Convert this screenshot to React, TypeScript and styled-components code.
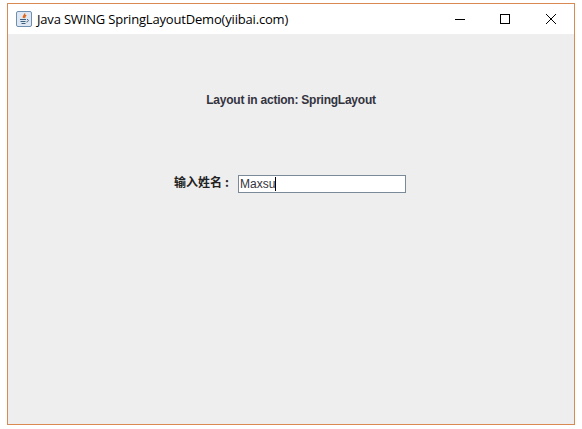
import React from "react";
import styled, { createGlobalStyle } from "styled-components";

const GlobalStyle = createGlobalStyle`
    html, body {
        margin: 0;
        background: #ffffff;
    }
`;

const Page = styled.div`
    width: 582px;
    height: 429px;
    padding: 3px 0 0 7px;
    box-sizing: border-box;
    overflow: hidden;
`;

const Frame = styled.div`
    width: 568px;
    height: 422px;
    box-sizing: border-box;
    border: 1px solid #d98a52;
    display: flex;
    flex-direction: column;
`;

const TitleBar = styled.div`
    height: 30px;
    flex: none;
    background: #ffffff;
    display: flex;
    align-items: center;
    padding-left: 8px;
`;

const TitleText = styled.span`
    margin-left: 5px;
    font: 13px/16px "Open Sans", "Noto Sans", sans-serif;
    color: #000000;
    white-space: nowrap;
    letter-spacing: -0.18px;
`;

const WindowButtons = styled.div`
    margin-left: auto;
    display: flex;
`;

const WindowButton = styled.div<{ $width: number }>`
    width: ${({ $width }) => $width}px;
    height: 30px;
    display: flex;
    align-items: center;
    justify-content: center;
`;

const Content = styled.div`
    flex: 1;
    background: #eeeeee;
    display: flex;
    flex-direction: column;
    padding-top: 59px;
`;

const Heading = styled.div`
    text-align: center;
    font: bold 12px/14px "Liberation Sans", Arial, sans-serif;
    letter-spacing: -0.24px;
    color: #333340;
`;

const FormRow = styled.div`
    margin-top: 68px;
    padding-left: 166px;
    display: flex;
    align-items: flex-start;
    gap: 6px;
`;

const FieldLabel = styled.label`
    width: 58px;
    white-space: nowrap;
    font: bold 12px/14px "Noto Sans CJK SC", sans-serif;
    color: #222222;
`;

const LabelColon = styled.span`
    margin-left: 3px;
`;

const TextBox = styled.div`
    width: 168px;
    height: 18px;
    box-sizing: border-box;
    background: #ffffff;
    border: 1px solid #7a8a99;
    display: flex;
    align-items: center;
    padding-left: 1px;
    font: 12px/14px "Liberation Sans", Arial, sans-serif;
    color: #333340;
`;

const Caret = styled.span`
    width: 1px;
    height: 14px;
    background: #000000;
`;

const JavaIcon = () => (
    <svg width="16" height="16" viewBox="0 0 16 16">
        <rect x="0.5" y="0.5" width="15" height="15" rx="1.5" fill="#dfe8f2" stroke="#6f8fb0" />
        <path d="M8.5 2.5c1 1.5-2 2.5-1 4.5M10 4c-.5 1-2 1.5-1 3" fill="none" stroke="#e2661b" strokeWidth="1.4" />
        <path d="M4 8.5h6M4.5 10.5h5M5.5 12.5h4" fill="none" stroke="#3f5f80" strokeWidth="1" />
        <path d="M11 8.5c2 0 2 2-.5 2.5" fill="none" stroke="#3f5f80" strokeWidth="1" />
    </svg>
);

const MinimizeIcon = () => (
    <svg width="10" height="10" viewBox="0 0 10 10">
        <path d="M0 5.5h10" stroke="#000000" strokeWidth="1" />
    </svg>
);

const MaximizeIcon = () => (
    <svg width="10" height="10" viewBox="0 0 10 10">
        <rect x="0.5" y="0.5" width="9" height="9" fill="none" stroke="#000000" strokeWidth="1" />
    </svg>
);

const CloseIcon = () => (
    <svg width="10" height="10" viewBox="0 0 10 10">
        <path d="M0 0l10 10M10 0L0 10" stroke="#000000" strokeWidth="1" />
    </svg>
);

export default function App() {
    return (
        <Page>
            <GlobalStyle />
            <Frame>
                <TitleBar>
                    <JavaIcon />
                    <TitleText>Java SWING SpringLayoutDemo(yiibai.com)</TitleText>
                    <WindowButtons>
                        <WindowButton $width={44}><MinimizeIcon /></WindowButton>
                        <WindowButton $width={46}><MaximizeIcon /></WindowButton>
                        <WindowButton $width={46}><CloseIcon /></WindowButton>
                    </WindowButtons>
                </TitleBar>
                <Content>
                    <Heading>Layout in action: SpringLayout</Heading>
                    <FormRow>
                        <FieldLabel>输入姓名<LabelColon>:</LabelColon></FieldLabel>
                        <TextBox>
                            Maxsu
                            <Caret />
                        </TextBox>
                    </FormRow>
                </Content>
            </Frame>
        </Page>
    );
}
